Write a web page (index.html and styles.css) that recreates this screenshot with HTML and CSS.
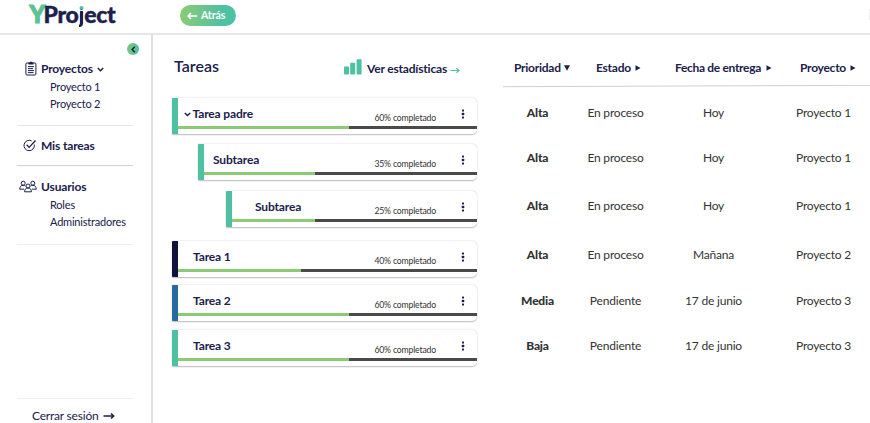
FILE: index.html
```html
<!DOCTYPE html>
<html lang="es">
<head>
<meta charset="utf-8">
<title>YProject</title>
<link rel="stylesheet" href="styles.css">
</head>
<body>
<header class="topbar">
  <div class="logo"><span class="logo-y">Y</span><span class="logo-rest">Pro<span class="logo-j">j</span>ect</span></div>
  <button class="back"><svg width="11" height="8" viewBox="0 0 11 8"><path d="M10.2 4H1M4 1L1 4l3 3"/></svg><span>Atrás</span></button>
  <span class="edge"></span>
</header>
<div class="body">
  <aside class="sidebar">
    <button class="collapse" aria-label="Contraer"><svg width="5" height="7" viewBox="0 0 5 7"><path d="M3.8 .8L1.2 3.5l2.6 2.7"/></svg></button>
    <nav>
      <section class="group projects">
        <div class="item"><svg class="ico" width="12" height="15" viewBox="0 0 12 15"><rect x=".9" y="2" width="10" height="12" rx="1"/><path class="fill" d="M3.5 3.4V1.6h1.3Q6 -.4 7.2 1.6h1.3v1.8z"/><path d="M3 5.6h6M3 7.6h5M3 9.6h6M3 11.6h5.5"/></svg><b>Proyectos</b><svg class="chev" width="7" height="5" viewBox="0 0 7 5"><path d="M.8 1l2.7 2.7L6.2 1"/></svg></div>
        <a>Proyecto 1</a>
        <a>Proyecto 2</a>
      </section>
      <section class="group mine">
        <div class="item"><svg class="ico" width="14" height="13" viewBox="0 0 14 13"><path d="M11.3 5.6A5.2 5.2 0 1 1 8.6 1.9"/><path d="M3.7 5.8l2.4 2.6L12.5 1.5" stroke-width="1.3"/></svg><b>Mis tareas</b></div>
      </section>
      <section class="group users">
        <div class="item"><svg class="ico" width="18" height="13" viewBox="0 0 18 13"><circle cx="4.2" cy="3.2" r="2"/><circle cx="13.8" cy="3.2" r="2"/><circle cx="9" cy="6" r="2"/><path d="M5 9.2H.8c0-2.4 1-3.9 3.4-3.9 1 0 1.8.3 2.2.8M13 9.2h4.2c0-2.4-1-3.9-3.4-3.9-1 0-1.8.3-2.2.8M5.6 11.8c0-2.5 1.2-3.8 3.4-3.8s3.4 1.3 3.4 3.8z"/></svg><b>Usuarios</b></div>
        <a>Roles</a>
        <a>Administradores</a>
      </section>
    </nav>
    <div class="logout"><span>Cerrar sesión</span><svg width="12" height="8" viewBox="0 0 12 8"><path d="M.5 4H10.5M8 1.5L10.7 4 8 6.5"/></svg></div>
  </aside>
  <main class="main">
    <section class="tasks">
      <div class="tasks-head">
        <h1>Tareas</h1>
        <a class="stats"><svg class="bars" width="18" height="16" viewBox="0 0 18 16"><rect x="0" y="7.5" width="5" height="8" rx=".7"/><rect x="6.2" y="3.7" width="5" height="11.8" rx=".7"/><rect x="12.6" y=".3" width="5" height="15.2" rx=".7"/></svg><b>Ver estadísticas</b><svg class="go" width="10" height="7" viewBox="0 0 10 7"><path d="M.3 3.5H9M6.4 1.2L9 3.5 6.4 5.8"/></svg></a>
      </div>
      <article class="card teal parent"><svg class="chev" width="7" height="5" viewBox="0 0 7 5"><path d="M.8 1l2.7 2.5L6.2 1"/></svg><b>Tarea padre</b><span class="pct">60% completado</span><i class="dots"></i><div class="progress"><div style="width:171px"></div></div></article>
      <article class="card teal sub1"><b>Subtarea</b><span class="pct">35% completado</span><i class="dots"></i><div class="progress"><div style="width:111px"></div></div></article>
      <article class="card teal sub2"><b>Subtarea</b><span class="pct">25% completado</span><i class="dots"></i><div class="progress"><div style="width:83px"></div></div></article>
      <article class="card navy t1"><b>Tarea 1</b><span class="pct">40% completado</span><i class="dots"></i><div class="progress"><div style="width:123px"></div></div></article>
      <article class="card blue t2"><b>Tarea 2</b><span class="pct">60% completado</span><i class="dots"></i><div class="progress"><div style="width:171px"></div></div></article>
      <article class="card teal t3"><b>Tarea 3</b><span class="pct">60% completado</span><i class="dots"></i><div class="progress"><div style="width:171px"></div></div></article>
    </section>
    <section class="table">
      <div class="thead">
        <div>Prioridad<svg class="down" width="6" height="6" viewBox="0 0 6 6"><path d="M0 .3h6L3 5.7z"/></svg></div>
        <div>Estado<svg width="6" height="6" viewBox="0 0 6 6"><path d="M.5 .3v5.4L5.5 3z"/></svg></div>
        <div class="fecha">Fecha de entrega<svg width="6" height="6" viewBox="0 0 6 6"><path d="M.5 .3v5.4L5.5 3z"/></svg></div>
        <div>Proyecto<svg width="6" height="6" viewBox="0 0 6 6"><path d="M.5 .3v5.4L5.5 3z"/></svg></div>
      </div>
      <svg class="rule" width="367" height="3" viewBox="0 0 367 3"><path d="M0 1.7L367 .3"/></svg>
      <div class="rows">
        <div class="row"><b>Alta</b><span>En proceso</span><span>Hoy</span><span>Proyecto 1</span></div>
        <div class="row"><b>Alta</b><span>En proceso</span><span>Hoy</span><span>Proyecto 1</span></div>
        <div class="row"><b>Alta</b><span>En proceso</span><span>Hoy</span><span>Proyecto 1</span></div>
        <div class="row"><b>Alta</b><span>En proceso</span><span>Mañana</span><span>Proyecto 2</span></div>
        <div class="row"><b>Media</b><span>Pendiente</span><span>17 de junio</span><span>Proyecto 3</span></div>
        <div class="row"><b>Baja</b><span>Pendiente</span><span>17 de junio</span><span>Proyecto 3</span></div>
      </div>
    </section>
  </main>
</div>
</body>
</html>
```

FILE: styles.css
```css
* { box-sizing: border-box; }
body { margin: 0; width: 870px; height: 423px; overflow: hidden; background: #fff; font-family: Lato, "Liberation Sans", sans-serif; color: #1b204c; display: flex; flex-direction: column; }
svg { display: block; flex: none; fill: none; stroke: currentColor; }
button { border: 0; padding: 0; font-family: inherit; }

.topbar { height: 35px; border-bottom: 2px solid #e6e6e6; display: flex; align-items: flex-start; flex: none; }
.logo { width: 152px; padding-left: 29.5px; display: flex; font-weight: 900; line-height: 28px; white-space: nowrap; }
.logo-y { font-size: 24px; width: 14px; color: #5cc294; -webkit-text-stroke: 1.2px #5cc294; }
.logo-rest { font-size: 23px; letter-spacing: -.3px; -webkit-text-stroke: .4px #1b204c; }
.logo-j { background: linear-gradient(#4fc1a3 9px, #1b204c 9px); background-clip: text; -webkit-background-clip: text; color: transparent; -webkit-text-stroke: 0; }
.back { width: 56px; height: 21px; margin: 5px 0 0 28px; border-radius: 11px; background: linear-gradient(90deg, #8ccb74, #4fc1a3 75%); color: #fff; display: flex; align-items: center; padding-left: 7px; gap: 3px; font-size: 10.5px; font-weight: 700; letter-spacing: -.1px; }
.back span { margin-top: -1px; }
.back svg { stroke-width: 1.5; }
.edge { margin: 9px 0 0 auto; width: 1px; height: 11px; background: #f1f1f1; }

.body { display: flex; flex: 1; min-height: 0; }
.sidebar { width: 153px; border-right: 2px solid #dedede; display: flex; flex-direction: column; padding: 8px 18px 0 17px; flex: none; }
.collapse { width: 12px; height: 12px; margin: 0 -6px 0 auto; border-radius: 50%; background: linear-gradient(90deg, #7bc87f, #4fc1a3); color: #151a45; display: flex; align-items: center; justify-content: center; }
.collapse svg { stroke-width: 1.5; }
.group { border-bottom: 1px solid #e6e6e6; display: flex; flex-direction: column; }
.item { display: flex; align-items: center; height: 18px; font-size: 12px; letter-spacing: -.15px; }
.item b { line-height: 18px; padding-top: 1px; }
.item .ico { margin-right: 5px; stroke-width: 1; }
.item .fill { fill: currentColor; stroke: none; }
.chev { stroke-width: 1.5; }
.item .chev { margin: 3px 0 0 4px; }
.group a { font-size: 11px; letter-spacing: -.2px; line-height: 18px; height: 17.5px; padding-left: 33px; white-space: nowrap; }
.projects { height: 71px; padding-top: 4px; }
.projects .ico { margin-left: 8px; margin-right: 4px; }
.projects a:first-of-type { margin-top: .5px; }
.mine { height: 40px; padding-top: 10px; border-color: #cfd3d5; }
.mine .ico { margin-left: 6px; margin-right: 4px; }
.users { height: 79px; padding-top: 11px; border-color: #eee; }
.users .ico { margin-left: 2px; margin-right: 4px; }
.users a:first-of-type { margin-top: .5px; }
.logout { margin-top: auto; height: 25px; border-top: 1px solid #eee; padding: 9px 0 0 15px; display: flex; align-items: center; gap: 4px; font-size: 12px; letter-spacing: -.2px; line-height: 16px; white-space: nowrap; }
.logout svg { stroke-width: 1.5; }

.main { display: flex; flex: 1; min-width: 0; overflow: hidden; padding-left: 19px; }
.tasks { width: 305px; margin-right: 26px; flex: none; }
.tasks-head { height: 63px; display: flex; align-items: flex-start; }
h1 { margin: 21px 0 0 2px; width: 170px; font-size: 16px; font-weight: 600; line-height: 20px; }
.stats { display: flex; align-items: center; padding-top: 26px; font-size: 12px; letter-spacing: -.18px; line-height: 16px; white-space: nowrap; }
.bars { fill: #4fc1a3; stroke: none; margin: -4px 5px 0 0; }
.go { color: #4fc1a3; margin: 2px 0 0 3px; stroke-width: 1.2; }
.card { height: 36px; background: #fff; border-left: 6px solid; border-radius: 1px 5px 5px 1px; box-shadow: 0 .5px 1.5px rgba(0, 0, 0, .28); display: grid; grid-template-columns: auto 1fr auto auto; grid-template-rows: 28px 3px; align-items: center; font-size: 12px; letter-spacing: -.15px; }
.card b { padding-left: 15px; line-height: 16px; padding-top: 4px; }
.pct { grid-column: 3; font-size: 8.7px; letter-spacing: -.18px; line-height: 12px; color: #333; padding-top: 12px; }
.dots { grid-column: 4; margin: 4px 13px 0 26px; width: 2px; height: 2px; background: #1b204c; border-radius: .5px; box-shadow: 0 -3.5px #1b204c, 0 3.5px #1b204c, 0 0 0 .3px #1b204c; }
.progress { grid-column: 1 / -1; grid-row: 2; height: 3px; background: #4a4a4a; }
.progress div { height: 3px; background: #8ccb74; }
.teal { border-left-color: #4fc1a3; }
.navy { border-left-color: #11133d; }
.blue { border-left-color: #28699e; }
.parent { grid-template-columns: auto auto 1fr auto auto; }
.parent .chev { margin: 5px 1.5px 0 6px; }
.parent b { padding-left: 0; }
.parent .pct { grid-column: 4; }
.parent .dots { grid-column: 5; }
.sub1 { margin: 10px 0 0 26px; }
.sub1 b { padding-left: 9px; }
.sub2 { margin: 11px 0 0 54px; }
.sub2 b { padding-left: 23px; }
.t1 { margin-top: 14px; }
.t2 { margin-top: 8px; }
.t3 { margin-top: 9px; }

.table { width: 376px; flex: none; }
.thead { height: 50px; padding: 24px 0 0 11px; display: grid; grid-template-columns: 82px 79px 125px 80px; font-size: 12px; letter-spacing: -.25px; line-height: 18px; font-weight: 700; white-space: nowrap; }
.thead div { display: flex; align-items: center; height: 18px; gap: 4px; }
.thead svg { fill: currentColor; stroke: none; }
.thead .down { margin-left: -1px; }
.thead .fecha { gap: 5px; letter-spacing: -.32px; }
.rule { stroke: #cfcfcf; }
.rows { display: grid; grid-template-rows: 49px 42px 53px 45px 47px 43px; color: #333; font-size: 12px; letter-spacing: -.2px; }
.row { display: grid; grid-template-columns: 69px 87px 109px 111px; align-items: center; text-align: center; line-height: 18px; }
.row b { font-weight: 900; }
```
